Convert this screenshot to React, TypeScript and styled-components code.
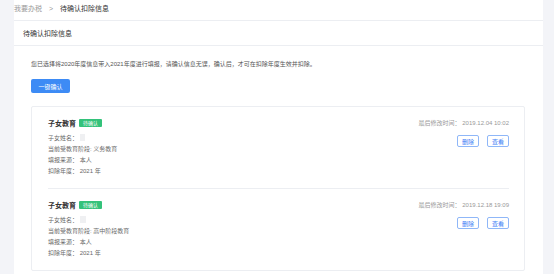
import styled, { createGlobalStyle } from 'styled-components'

const GlobalStyle = createGlobalStyle`
  html, body {
    margin: 0;
    padding: 0;
    background: #f3f4f8;
    font-family: "Liberation Sans", "Noto Sans CJK SC", sans-serif;
  }
`

const Page = styled.div`
  display: flex;
  padding: 0 11px 0 14px;
  min-height: 274px;
  box-sizing: border-box;
`

const Main = styled.div`
  width: 529px;
  background: #fff;
  min-height: 274px;
`

const Breadcrumb = styled.div`
  height: 20px;
  line-height: 18px;
  border-bottom: 1px solid #eceef2;
  font-size: 7px;
  color: #999;
  display: flex;
  gap: 7px;
`

const Current = styled.span`
  color: #333;
`

const TitleBar = styled.div`
  height: 24px;
  line-height: 25px;
  padding-left: 9px;
  border-bottom: 1px solid #eceef2;
  font-size: 7px;
  color: #333;
`

const Body = styled.div`
  padding: 14px 18px 0 17px;
`

const Notice = styled.p`
  margin: 0;
  font-size: 6px;
  line-height: 8px;
  color: #555;
`

const PrimaryButton = styled.button`
  display: block;
  margin-top: 11px;
  width: 39px;
  height: 14px;
  padding: 0;
  border: none;
  border-radius: 2px;
  background: #3d8bf5;
  color: #fff;
  font-family: inherit;
  font-size: 6px;
`

const Card = styled.div`
  margin-top: 13px;
  border: 1px solid #eceef2;
  border-radius: 2px;
  padding: 0 15px 0 16px;
`

const Item = styled.div`
  display: flex;
  justify-content: space-between;
  padding: 11px 0;
  & + & {
    border-top: 1px solid #eceef2;
  }
`

const TitleRow = styled.div`
  height: 10px;
  display: flex;
  align-items: center;
  gap: 3px;
`

const ItemTitle = styled.span`
  font-size: 7px;
  font-weight: bold;
  color: #333;
`

const Tag = styled.span`
  width: 23px;
  height: 8px;
  line-height: 8px;
  border-radius: 1px;
  background: #33c27a;
  color: #fff;
  font-size: 5px;
  text-align: center;
`

const Fields = styled.div`
  margin-top: 5px;
  font-size: 6px;
  line-height: 11px;
  color: #6a6a6a;
`

const Blur = styled.span<{ $w: number }>`
  display: inline-block;
  width: ${p => p.$w}px;
  height: 7px;
  vertical-align: -1px;
  margin-left: 2px;
  background: #eff0f2;
`

const Side = styled.div`
  display: flex;
  flex-direction: column;
  align-items: flex-end;
`

const Time = styled.div`
  height: 10px;
  line-height: 10px;
  font-size: 6px;
  color: #999;
`

const Actions = styled.div`
  margin-top: 7px;
  display: flex;
  gap: 8px;
`

const GhostButton = styled.button`
  width: 22px;
  height: 12px;
  padding: 0;
  border: 1px solid #8fb7f8;
  border-radius: 2px;
  background: #fff;
  color: #3d7ef5;
  font-family: inherit;
  font-size: 6px;
`

const items = [
  { stage: '义务教育', time: '2019.12.04 10:02', blur: 5 },
  { stage: '高中阶段教育', time: '2019.12.18 19:09', blur: 6 },
]

export default function App() {
  return (
    <>
      <GlobalStyle />
      <Page>
        <Main>
          <Breadcrumb>
            <span>我要办税</span>
            <span>&gt;</span>
            <Current>待确认扣除信息</Current>
          </Breadcrumb>
          <TitleBar>待确认扣除信息</TitleBar>
          <Body>
            <Notice>
              您已选择将2020年度信息带入2021年度进行填报，请确认信息无误，确认后，才可在扣除年度生效并扣除。
            </Notice>
            <PrimaryButton>一键确认</PrimaryButton>
            <Card>
              {items.map(item => (
                <Item key={item.time}>
                  <div>
                    <TitleRow>
                      <ItemTitle>子女教育</ItemTitle>
                      <Tag>待确认</Tag>
                    </TitleRow>
                    <Fields>
                      <div>
                        子女姓名：
                        <Blur $w={item.blur} />
                      </div>
                      <div>当前受教育阶段: {item.stage}</div>
                      <div>填报来源： 本人</div>
                      <div>扣除年度： 2021 年</div>
                    </Fields>
                  </div>
                  <Side>
                    <Time>最后修改时间： {item.time}</Time>
                    <Actions>
                      <GhostButton>删除</GhostButton>
                      <GhostButton>查看</GhostButton>
                    </Actions>
                  </Side>
                </Item>
              ))}
            </Card>
          </Body>
        </Main>
      </Page>
    </>
  )
}
